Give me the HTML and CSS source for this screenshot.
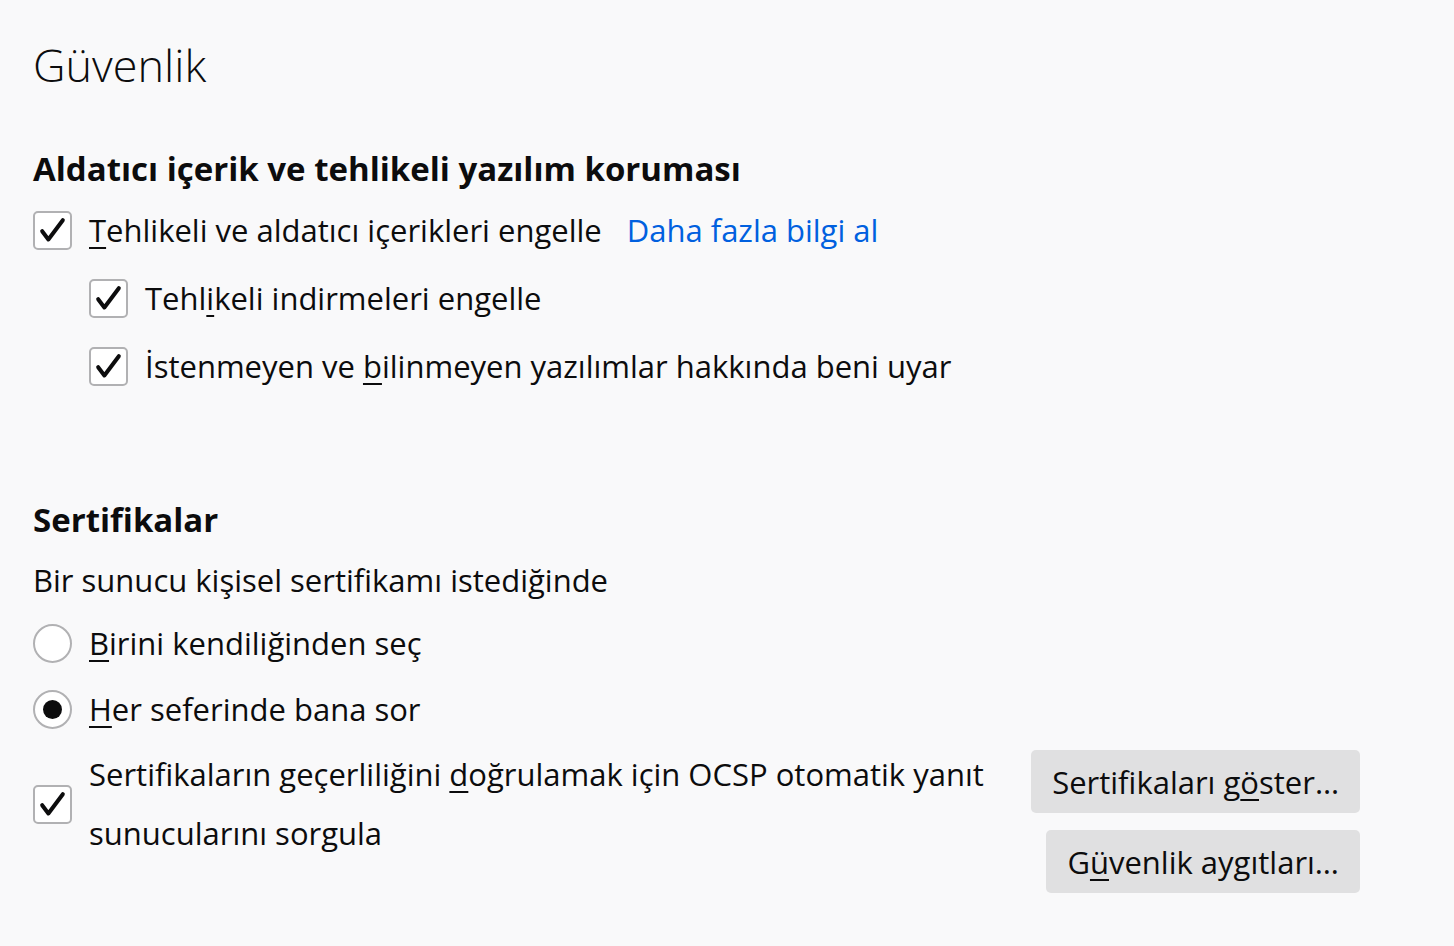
FILE: index.html
```html
<!DOCTYPE html>
<html lang="tr">
<head>
<meta charset="utf-8">
<title>Güvenlik</title>
<link rel="stylesheet" href="styles.css">
</head>
<body>
<main class="page">
  <h1 class="title">Güvenlik</h1>

  <section class="group">
    <h2 class="group-title">Aldatıcı içerik ve tehlikeli yazılım koruması</h2>
    <div class="option">
      <span class="check checked"><svg viewBox="0 0 24 24"><path d="M4.5 12.5l4.5 6L19.5 4.5"/></svg></span>
      <span class="label"><u>T</u>ehlikeli ve aldatıcı içerikleri engelle</span>
      <a class="link" href="#">Daha fazla bilgi al</a>
    </div>
    <div class="option sub">
      <span class="check checked"><svg viewBox="0 0 24 24"><path d="M4.5 12.5l4.5 6L19.5 4.5"/></svg></span>
      <span class="label">Tehl<u>i</u>keli indirmeleri engelle</span>
    </div>
    <div class="option sub">
      <span class="check checked"><svg viewBox="0 0 24 24"><path d="M4.5 12.5l4.5 6L19.5 4.5"/></svg></span>
      <span class="label">İstenmeyen ve <u>b</u>ilinmeyen yazılımlar hakkında beni uyar</span>
    </div>
  </section>

  <section class="group certs">
    <h2 class="group-title">Sertifikalar</h2>
    <p class="desc">Bir sunucu kişisel sertifikamı istediğinde</p>
    <div class="option radio-row">
      <span class="radio"></span>
      <span class="label"><u>B</u>irini kendiliğinden seç</span>
    </div>
    <div class="option radio-row">
      <span class="radio selected"></span>
      <span class="label"><u>H</u>er seferinde bana sor</span>
    </div>
    <div class="ocsp">
      <div class="option ocsp-option">
        <span class="check checked"><svg viewBox="0 0 24 24"><path d="M4.5 12.5l4.5 6L19.5 4.5"/></svg></span>
        <span class="label multi">Sertifikaların geçerliliğini <u>d</u>oğrulamak için OCSP otomatik yanıt<br>sunucularını sorgula</span>
      </div>
      <div class="buttons">
        <button class="btn">Sertifikaları g<u>ö</u>ster…</button>
        <button class="btn">G<u>ü</u>venlik aygıtları…</button>
      </div>
    </div>
  </section>
</main>
</body>
</html>
```

FILE: styles.css
```css
html, body {
  margin: 0;
  padding: 0;
  background: #f9f9fa;
}

body {
  font-family: "Open Sans", "Noto Sans", sans-serif;
  color: #0c0c0d;
  font-size: 31px;
}

.page {
  padding: 30px 94px 0 33px;
}

u {
  text-decoration: underline;
  text-decoration-thickness: 2px;
  text-underline-offset: 5px;
}

.title {
  margin: 0;
  font-size: 45px;
  font-weight: 300;
  line-height: 70px;
}

.group {
  margin-top: 47px;
}

.group-title {
  margin: 0 0 5px;
  font-size: 33px;
  font-weight: 700;
  line-height: 44px;
}

.option {
  display: flex;
  align-items: center;
  gap: 17px;
  height: 68px;
}

.option.sub {
  padding-left: 56px;
}

.check {
  box-sizing: border-box;
  width: 39px;
  height: 39px;
  flex: none;
  border: 2px solid #b1b1b3;
  border-radius: 5px;
  background: #fff;
  display: flex;
  align-items: center;
  justify-content: center;
}

.check svg {
  width: 33px;
  height: 33px;
  fill: none;
  stroke: #0c0c0d;
  stroke-width: 2.9;
  stroke-linecap: round;
  stroke-linejoin: round;
}

.link {
  margin-left: 8px;
  color: #0060df;
  text-decoration: none;
}

.certs {
  margin-top: 98px;
}

.certs .group-title {
  margin-bottom: 13px;
}

.desc {
  margin: 0 0 5px;
  line-height: 50px;
}

.radio-row {
  height: 66px;
}

.radio {
  box-sizing: border-box;
  width: 39px;
  height: 39px;
  flex: none;
  border: 2px solid #b1b1b3;
  border-radius: 50%;
  background: #fff;
  position: relative;
}

.radio.selected::after {
  content: "";
  position: absolute;
  left: 8px;
  top: 8px;
  width: 19px;
  height: 19px;
  border-radius: 50%;
  background: #0c0c0d;
}

.ocsp {
  display: flex;
  justify-content: space-between;
  align-items: flex-start;
  margin-top: 3px;
}

.ocsp-option {
  height: auto;
  align-items: center;
}

.label.multi {
  line-height: 59px;
}

.buttons {
  display: flex;
  flex-direction: column;
  align-items: flex-end;
  gap: 17px;
  padding-top: 5px;
}

.btn {
  font: inherit;
  color: #0c0c0d;
  background: #e0e0e1;
  border: none;
  border-radius: 5px;
  height: 63px;
  padding: 0 21px;
  cursor: pointer;
}
```
